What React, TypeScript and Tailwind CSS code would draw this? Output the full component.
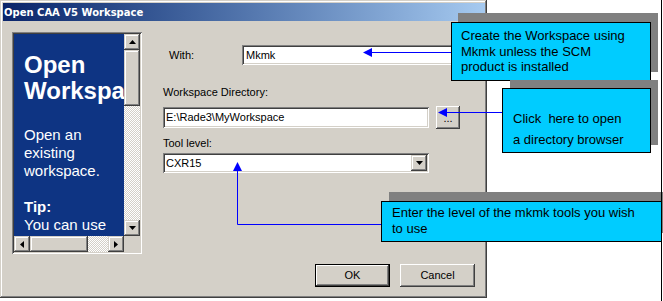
import React from 'react';

const frame =
  'shadow-[inset_-1px_-1px_0_#404040,inset_1px_1px_0_#d4d0c8,inset_-2px_-2px_0_#808080,inset_2px_2px_0_#ffffff]';
const raised =
  'shadow-[inset_-1px_-1px_0_#404040,inset_1px_1px_0_#ffffff,inset_-2px_-2px_0_#808080,inset_2px_2px_0_#d4d0c8]';
const sunken =
  'shadow-[inset_1px_1px_0_#808080,inset_-1px_-1px_0_#ffffff,inset_2px_2px_0_#404040,inset_-2px_-2px_0_#d4d0c8]';
const checker =
  'bg-[image:repeating-conic-gradient(#d4d0c8_0_25%,#ffffff_0_50%)] bg-[length:2px_2px]';

type Dir = 'up' | 'down' | 'left' | 'right';

const Tri = ({ dir }: { dir: Dir }) => {
  if (dir === 'up' || dir === 'down') {
    return (
      <svg width="7" height="4" viewBox="0 0 7 4">
        <polygon points={dir === 'up' ? '0,4 7,4 3.5,0' : '0,0 7,0 3.5,4'} fill="#000" />
      </svg>
    );
  }
  return (
    <svg width="4" height="7" viewBox="0 0 4 7">
      <polygon points={dir === 'left' ? '4,0 4,7 0,3.5' : '0,0 0,7 4,3.5'} fill="#000" />
    </svg>
  );
};

const ScrollBtn = ({ dir }: { dir: Dir }) => (
  <div className={`w-[16px] h-[16px] bg-[#d4d0c8] flex items-center justify-center ${frame}`}>
    <Tri dir={dir} />
  </div>
);

const LeftPanel = () => (
  <div className={`ml-[9px] mt-[11px] w-[130px] h-[222px] p-[2px] bg-[#d4d0c8] ${sunken}`}>
    <div className="grid grid-cols-[110px_16px] grid-rows-[202px_16px]">
      {/* help page */}
      <div className="bg-[#0e3483] text-white overflow-hidden pl-[10px] pt-[18px] whitespace-nowrap">
        <div className="text-[24px] leading-[26px] font-bold">
          Open
          <br />
          Workspace
        </div>
        <div className="mt-[22px] text-[15px] leading-[18px]">
          Open an
          <br />
          existing
          <br />
          workspace.
          <br />
          <br />
          <span className="font-bold">Tip:</span>
          <br />
          You can use
          <br />
          the Workspace
        </div>
      </div>
      {/* vertical scrollbar */}
      <div className="flex flex-col">
        <ScrollBtn dir="up" />
        <div className={`h-[56px] bg-[#d4d0c8] ${frame}`} />
        <div className={`flex-1 ${checker}`} />
        <ScrollBtn dir="down" />
      </div>
      {/* horizontal scrollbar */}
      <div className="flex">
        <ScrollBtn dir="left" />
        <div className={`w-[58px] bg-[#d4d0c8] ${frame}`} />
        <div className={`flex-1 ${checker}`} />
        <ScrollBtn dir="right" />
      </div>
      <div className="bg-[#d4d0c8]" />
    </div>
  </div>
);

const Field = ({ text, className }: { text: string; className: string }) => (
  <div className={`bg-white flex items-center pl-[3px] text-[11px] text-black ${sunken} ${className}`}>
    {text}
  </div>
);

const Dialog = () => (
  <div className={`w-[487px] h-[298px] bg-[#d4d0c8] pt-[3px] pl-[3px] pr-[2px] flex flex-col ${frame}`}>
    <div className="h-[18px] flex items-center pl-[1px] bg-linear-to-r from-[#0a246a] to-[#a6caf0] text-white font-bold text-[10px] font-['DejaVu_Sans',sans-serif]">
      Open CAA V5 Workspace
    </div>
    <div className="flex">
      <LeftPanel />
      <div className="ml-[21px] w-[313px] flex flex-col text-[11px] text-black">
        <div className="mt-[24px] flex items-center">
          <span className="w-[79px] pl-[6px]">With:</span>
          <Field text="Mkmk" className="w-[234px] h-[20px] pl-[4px]" />
        </div>
        <div className="mt-[21px] h-[13px] leading-[13px]">Workspace Directory:</div>
        <div className="mt-[7px] flex items-center gap-[7px]">
          <Field text="E:\Rade3\MyWorkspace" className="w-[266px] h-[21px]" />
          <div className={`w-[24px] h-[23px] bg-[#d4d0c8] flex items-end justify-center pb-[5px] leading-none ${raised}`}>
            ...
          </div>
        </div>
        <div className="mt-[8px] h-[13px] leading-[13px]">Tool level:</div>
        <div className={`mt-[3px] w-[266px] h-[20px] bg-white flex items-center p-[2px] ${sunken}`}>
          <span className="flex-1 pl-[1px]">CXR15</span>
          <div className={`w-[16px] h-[16px] bg-[#d4d0c8] flex items-center justify-center ${frame}`}>
            <Tri dir="down" />
          </div>
        </div>
        <div className="mt-[91px] flex justify-end gap-[10px] pr-[1px]">
          <div className="w-[75px] h-[23px] border border-black">
            <div className={`w-full h-full bg-[#d4d0c8] flex items-center justify-center ${raised}`}>OK</div>
          </div>
          <div className={`w-[75px] h-[23px] bg-[#d4d0c8] flex items-center justify-center ${raised}`}>
            Cancel
          </div>
        </div>
      </div>
    </div>
  </div>
);

const Arrows = () => (
  <svg className="absolute left-0 top-0 pointer-events-none" width="663" height="301">
    <line x1="371" y1="52.5" x2="451" y2="52.5" stroke="#0000ff" strokeWidth="1" />
    <polygon points="363,52.5 372,48 372,57" fill="#0000ff" />
    <line x1="446" y1="112.5" x2="502" y2="112.5" stroke="#0000ff" strokeWidth="1" />
    <polygon points="438,112.5 447,108 447,117" fill="#0000ff" />
    <polyline points="237.5,170 237.5,224.5 381,224.5" fill="none" stroke="#0000ff" strokeWidth="1" />
    <polygon points="237.5,162 233,171 242,171" fill="#0000ff" />
  </svg>
);

const App = () => (
  <div className="relative w-[663px] h-[301px] bg-white overflow-hidden font-['Liberation_Sans',Arial,sans-serif]">
    <Dialog />
    <Arrows />

    {/* callout: With */}
    <div className="absolute left-[458px] top-[13px] w-[200px] h-[59px] bg-[#808080]" />
    <div className="absolute left-[451px] top-[22px] w-[200px] h-[59px] bg-[#00ccff] border border-black pl-[9px] pt-[5px] text-[13px] leading-[15.5px] text-black whitespace-nowrap">
      Create the Workspace using
      <br />
      Mkmk unless the SCM
      <br />
      product is installed
    </div>

    {/* callout: directory */}
    <div className="absolute left-[510px] top-[80px] w-[148px] h-[65px] bg-[#808080]" />
    <div className="absolute left-[502px] top-[88px] w-[149px] h-[65px] bg-[#00ccff] border border-black pl-[10px] pt-[19px] text-[13px] leading-[21px] text-black whitespace-pre">
      {'Click  here to open\na directory browser'}
    </div>

    {/* callout: tool level */}
    <div className="absolute left-[389px] top-[192px] w-[274px] h-[41px] bg-[#808080]" />
    <div className="absolute left-[381px] top-[201px] w-[281px] h-[41px] bg-[#00ccff] border border-black pl-[10px] pt-[3px] text-[13px] leading-[16px] text-black whitespace-nowrap">
      Enter the level of the mkmk tools you wish
      <br />
      to use
    </div>

    <div className="absolute left-[661px] top-0 w-px h-full bg-black" />
  </div>
);

export default App;
